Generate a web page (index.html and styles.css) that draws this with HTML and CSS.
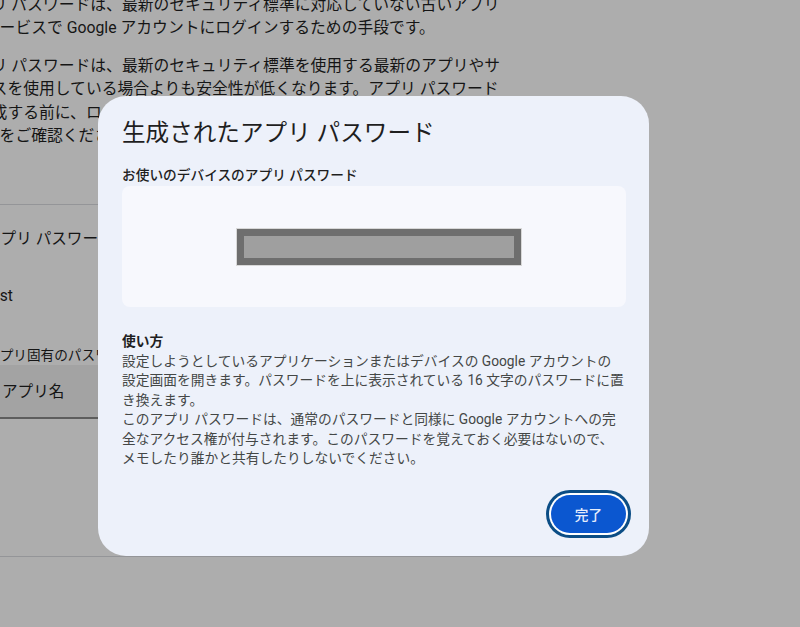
FILE: index.html
```html
<!DOCTYPE html>
<html lang="ja">
<head>
<meta charset="utf-8">
<title>アプリ パスワード</title>
<link rel="stylesheet" href="styles.css">
</head>
<body>
<main class="page">
  <p class="para first">
    <span class="ln">アプリ パスワードは、最新のセキュリティ標準に対応していない古いアプリ</span>
    <span class="ln nudge">やサービスで Google アカウントにログインするための手段です。</span>
  </p>
  <p class="para">
    <span class="ln">アプリ パスワードは、最新のセキュリティ標準を使用する最新のアプリやサ</span>
    <span class="ln">ービスを使用している場合よりも安全性が低くなります。アプリ パスワード</span>
    <span class="ln">を作成する前に、ログインに 2 段階認証プロセスが必要かどうか</span>
    <span class="ln nudge">うかをご確認ください。</span>
  </p>
  <hr class="divider top-divider">
  <h2 class="section-title">アプリ パスワード</h2>
  <div class="app-row">Test</div>
  <label class="field-label">アプリ固有のパスワードを作成するには、アプリ名を入力してください</label>
  <div class="field">アプリ名</div>
  <hr class="divider bottom-divider">
</main>

<div class="scrim"></div>

<section class="dialog" role="dialog" aria-labelledby="dlg-title">
  <h1 class="dialog-title" id="dlg-title">生成されたアプリ パスワード</h1>
  <div class="pw-label">お使いのデバイスのアプリ パスワード</div>
  <div class="pw-box">
    <div class="redact"></div>
  </div>
  <h3 class="howto-title">使い方</h3>
  <p class="howto">設定しようとしているアプリケーションまたはデバイスの Google アカウントの<br>設定画面を開きます。パスワードを上に表示されている 16 文字のパスワードに置<br>き換えます。<br>このアプリ パスワードは、通常のパスワードと同様に Google アカウントへの完<br>全なアクセス権が付与されます。このパスワードを覚えておく必要はないので、<br>メモしたり誰かと共有したりしないでください。</p>
  <div class="actions">
    <button class="done-btn" type="button">完了</button>
  </div>
</section>
</body>
</html>
```

FILE: styles.css
```css
* { box-sizing: border-box; }

html, body {
  margin: 0;
  padding: 0;
  width: 800px;
  height: 627px;
  overflow: hidden;
  background: #ffffff;
}

body {
  font-family: Roboto, "Noto Sans CJK JP", sans-serif;
  color: #1f1f1f;
}

/* ---------- background page ---------- */
.page {
  width: 610px;
  margin-left: -40px;
  margin-top: -7px;
}

.para {
  margin: 0;
  font-size: 15.8px;
  line-height: 23.4px;
  white-space: nowrap;
}

.para + .para { margin-top: 14px; }

.ln { display: block; }
.nudge { padding-left: 8px; }

.divider {
  border: 0;
  height: 1px;
  background: #dadce0;
  margin: 0;
}

.top-divider { margin-top: 57px; }

.section-title {
  margin: 22px 0 0;
  padding-left: 25px;
  font-size: 15.6px;
  font-weight: 400;
  line-height: 24px;
}

.app-row {
  margin-top: 33px;
  padding-left: 23px;
  font-size: 15.6px;
  line-height: 24px;
}

.field-label {
  display: block;
  margin-top: 37px;
  padding-left: 26px;
  font-size: 13.65px;
  line-height: 20px;
  white-space: nowrap;
}

.field {
  height: 54px;
  padding: 15px 0 0 42px;
  background: #f1f1f1;
  border-bottom: 2px solid #8a8a8a;
  font-size: 15.6px;
  line-height: 24px;
}

.bottom-divider { margin-top: 137px; }

/* ---------- scrim ---------- */
.scrim {
  position: fixed;
  inset: 0;
  background: rgba(0, 0, 0, 0.32);
}

/* ---------- dialog ---------- */
.dialog {
  position: fixed;
  left: 98px;
  top: 96px;
  width: 551px;
  padding: 21px 23px 23px 24px;
  background: #edf1fa;
  border-radius: 28px;
  font-family: Roboto, "Noto Sans CJK JP", sans-serif;
}

.dialog-title {
  margin: 0;
  font-size: 23.6px;
  font-weight: 400;
  line-height: 32px;
  color: #1f1f1f;
  white-space: nowrap;
}

.pw-label {
  margin-top: 16px;
  font-size: 13.7px;
  font-weight: 500;
  line-height: 20px;
  color: #1f1f1f;
}

.pw-box {
  margin-top: 1px;
  height: 121px;
  border-radius: 8px;
  background: #f7f8fd;
  display: flex;
  align-items: center;
  justify-content: center;
  padding-left: 9px;
}

.redact {
  width: 284px;
  height: 36px;
  background: #9f9f9f;
  border: 7px solid #6e6e6e;
  outline: 1px solid #d8d8d8;
}

.howto-title {
  margin: 25px 0 0;
  font-size: 13.75px;
  font-weight: 700;
  line-height: 19.5px;
  color: #1f1f1f;
}

.howto {
  margin: 0;
  font-size: 13.75px;
  line-height: 19.5px;
  color: #444746;
  white-space: nowrap;
}

.actions {
  margin-top: 26px;
  display: flex;
  justify-content: flex-end;
}

.done-btn {
  width: 75px;
  height: 38px;
  border: 0;
  border-radius: 19px;
  background: #0b57d0;
  color: #e6edfc;
  font-family: Roboto, "Noto Sans CJK JP", sans-serif;
  font-size: 13.7px;
  font-weight: 500;
  box-shadow: 0 0 0 2px #ffffff, 0 0 0 5px #0b4d85;
  padding: 0;
}
```
